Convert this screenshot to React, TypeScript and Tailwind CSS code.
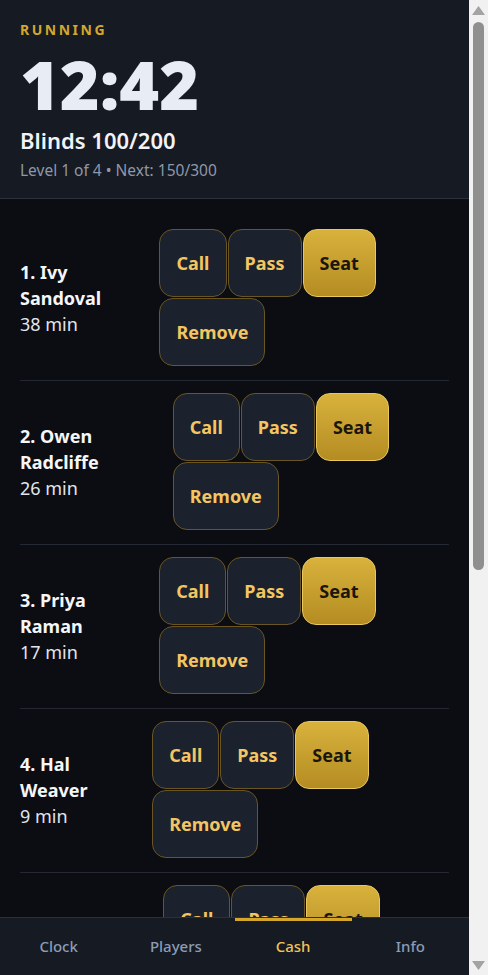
import { useState } from 'react';

interface WaitingPlayer {
  id: number;
  name: string;
  waited: number;
}

const players: WaitingPlayer[] = [
  { id: 1, name: 'Ivy Sandoval', waited: 38 },
  { id: 2, name: 'Owen Radcliffe', waited: 26 },
  { id: 3, name: 'Priya Raman', waited: 17 },
  { id: 4, name: 'Hal Weaver', waited: 9 },
  { id: 5, name: 'Noah Castillo', waited: 6 },
  { id: 6, name: 'June Whitaker', waited: 4 },
  { id: 7, name: 'Sam Okafor', waited: 2 },
  { id: 8, name: 'Lena Brooks', waited: 1 },
];

const tabs = ['Clock', 'Players', 'Cash', 'Info'] as const;

function ActionButton({ label, primary }: { label: string; primary?: boolean }) {
  return (
    <button
      className={`rounded-[14px] border px-4 py-[19px] text-lg leading-7 font-bold ${
        primary
          ? 'bg-linear-to-b from-[#d8b23c] to-[#b48c22] border-[#e9c95f] text-[#1a160d]'
          : 'bg-[#1b212d] border-[#6a5624] text-[#f3c662]'
      }`}
    >
      {label}
    </button>
  );
}

// classic window scrollbar, drawn since the page hides native ones
function Scrollbar() {
  return (
    <div className="w-[19px] shrink-0 bg-[#f1f1f1] flex flex-col items-center">
      <svg width="13" height="9" viewBox="0 0 13 9" className="mt-[6px]">
        <path d="M6.5 0L13 9H0z" fill="#a3a3a3" />
      </svg>
      <div className="mt-[7px] w-[11px] h-[548px] rounded-full bg-[#8f8f8f]" />
      <svg width="13" height="9" viewBox="0 0 13 9" className="mt-auto mb-[5px]">
        <path d="M0 0H13L6.5 9z" fill="#a3a3a3" />
      </svg>
    </div>
  );
}

export default function App() {
  const [tab, setTab] = useState<(typeof tabs)[number]>('Cash');

  return (
    <div className="h-screen flex bg-[#0b0d12] font-['Noto_Sans',sans-serif]">
      <div className="flex-1 min-w-0 overflow-y-auto [scrollbar-width:none]">
        {/* Clock header */}
        <div className="bg-[#161a22] px-5 pt-5 pb-[18px] border-b border-[#2a303c]">
          <div className="text-sm font-bold tracking-[0.18em] text-[#d4a72c]">RUNNING</div>
          <div className="mt-[10px] text-[68px] leading-none font-black text-[#e8ecf5]">12:42</div>
          <div className="mt-2 text-[22px] leading-7 font-semibold text-[#f1f3f8]">Blinds 100/200</div>
          <div className="mt-1.5 text-[15.5px] leading-5 text-[#8e98aa]">Level 1 of 4 • Next: 150/300</div>
        </div>

        {/* Waitlist */}
        <div className="px-5 pt-[18px] pb-32">
          {players.map((p, i) => (
            <div key={p.id} className="flex items-center gap-5 pt-3 pb-[14px] border-b border-[#232833]">
              <div>
                <p className="text-lg leading-[26px] font-bold text-[#f5f6fa]">
                  {i + 1}. {p.name}
                </p>
                <p className="text-lg leading-[26px] text-[#e2e5ec]">{p.waited} min</p>
              </div>
              <div className="flex flex-wrap gap-px">
                <ActionButton label="Call" />
                <ActionButton label="Pass" />
                <ActionButton label="Seat" primary />
                <ActionButton label="Remove" />
              </div>
            </div>
          ))}
        </div>

        {/* Bottom nav */}
        <nav className="sticky bottom-0 h-[58px] bg-[#161a22] border-t border-[#2a303c] grid grid-cols-4">
          {tabs.map((t) => (
            <button
              key={t}
              onClick={() => setTab(t)}
              className={`relative flex items-center justify-center text-[15px] font-medium ${
                tab === t ? 'text-[#f0c35a]' : 'text-[#8c9cb6]'
              }`}
            >
              {tab === t && <span className="absolute top-0 inset-x-0 h-[3px] bg-[#d4a72c]" />}
              {t}
            </button>
          ))}
        </nav>
      </div>
      <Scrollbar />
    </div>
  );
}
